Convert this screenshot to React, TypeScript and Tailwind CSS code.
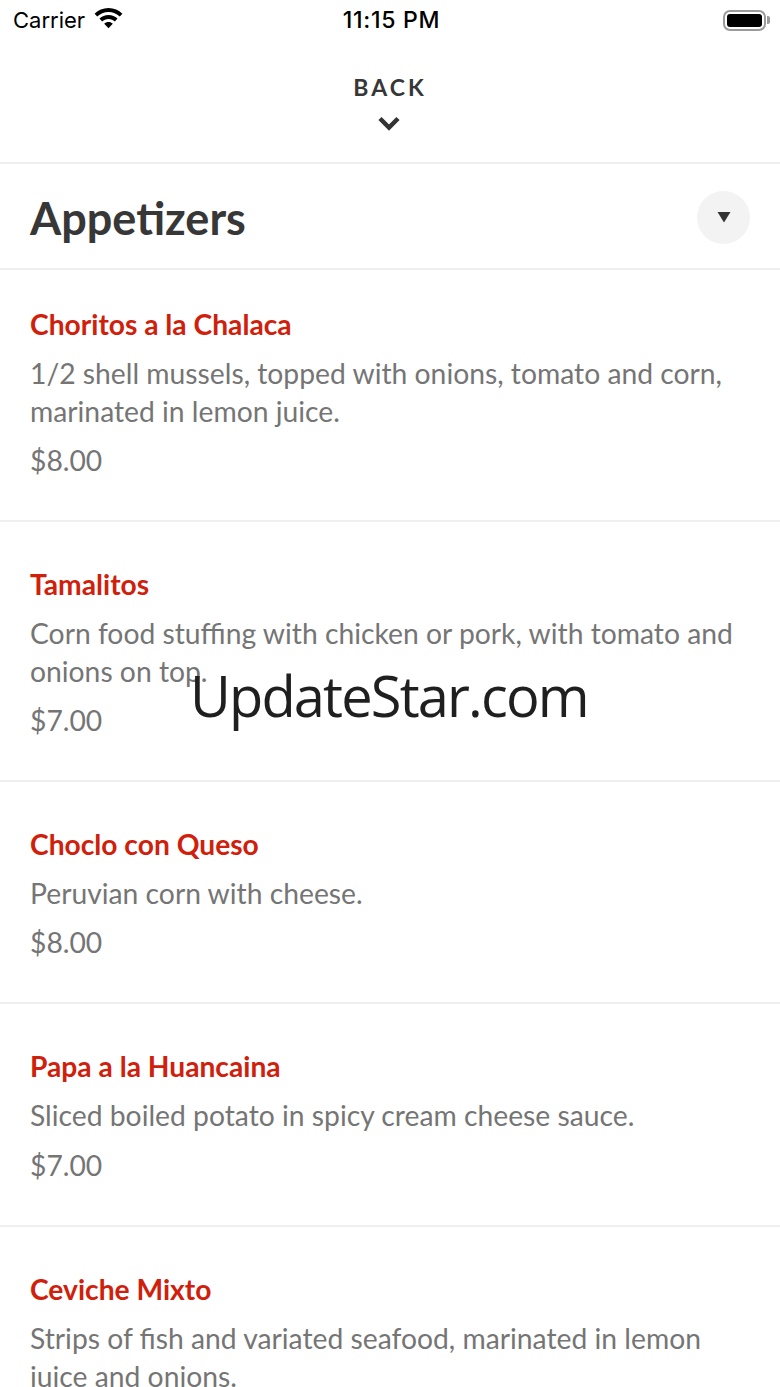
const items = [
  {
    name: "Choritos a la Chalaca",
    desc: ["1/2 shell mussels, topped with onions, tomato and corn,", "marinated in lemon juice."],
    price: "$8.00",
  },
  {
    name: "Tamalitos",
    desc: ["Corn food stuffing with chicken or pork, with tomato and", "onions on top."],
    price: "$7.00",
  },
  { name: "Choclo con Queso", desc: ["Peruvian corn with cheese."], price: "$8.00" },
  { name: "Papa a la Huancaina", desc: ["Sliced boiled potato in spicy cream cheese sauce."], price: "$7.00" },
  {
    name: "Ceviche Mixto",
    desc: ["Strips of fish and variated seafood, marinated in lemon", "juice and onions."],
    price: "",
  },
];

function StatusBar() {
  return (
    <div className="flex h-[40px] items-center justify-between pl-[13px] pr-[10px] text-black">
      <div className="flex w-[200px] items-center gap-[9px]">
        <span className="font-['Inter',sans-serif] text-[22px] leading-none">Carrier</span>
        <svg width="29" height="21" viewBox="0 0 29 21" className="mt-[-4px]">
          <path d="M14.5 0C9 0 4.2 2.2 0.6 5.7l2.6 2.8C6.1 5.6 10.1 3.9 14.5 3.9s8.4 1.7 11.3 4.6l2.6-2.8C24.8 2.2 20 0 14.5 0z" fill="#000" />
          <path d="M14.5 7c-3.5 0-6.6 1.4-9 3.6l2.6 2.8c1.7-1.6 3.9-2.5 6.4-2.5s4.7 1 6.4 2.5l2.6-2.8c-2.4-2.2-5.5-3.6-9-3.6z" fill="#000" />
          <path d="M14.5 14c-1.7 0-3.2 0.7-4.3 1.7l4.3 4.6 4.3-4.6c-1.1-1-2.6-1.7-4.3-1.7z" fill="#000" />
        </svg>
      </div>
      <span className="font-['Inter',sans-serif] text-[23px] font-medium leading-none tracking-[0.7px]">11:15 PM</span>
      <div className="flex w-[200px] items-center justify-end">
        <div className="flex h-[21px] w-[43px] items-center rounded-[7px] border-2 border-[#9b9b9b] p-[2px]">
          <div className="h-full w-full rounded-[3px] bg-black" />
        </div>
        <div className="ml-[1px] h-[8px] w-[3px] rounded-r-[2px] bg-[#9b9b9b]" />
      </div>
    </div>
  );
}

export default function App() {
  return (
    <div className="relative h-[1387px] w-[780px] overflow-hidden bg-white font-['Lato',sans-serif]">
      <StatusBar />

      <div className="flex h-[124px] flex-col items-center border-b-2 border-[#efefef] pt-[32px]">
        <span className="text-[23px] font-bold leading-[30px] tracking-[3px] text-[#373737]">BACK</span>
        <svg width="24" height="16" viewBox="0 0 24 16" className="mr-[2px] mt-[14px]">
          <path d="M3 2.5l9 9 9-9" fill="none" stroke="#333" strokeWidth="4.5" />
        </svg>
      </div>

      <div className="flex h-[106px] items-center justify-between border-b-2 border-[#efefef] pl-[30px] pr-[30px]">
        <h1 className="pt-[4px] text-[45px] font-bold leading-none text-[#373737]">Appetizers</h1>
        <div className="mt-[2px] flex h-[53px] w-[53px] items-center justify-center rounded-full bg-[#f3f3f3]">
          <svg width="14" height="12" viewBox="0 0 14 12">
            <path d="M0.5 1h13L7 11.5z" fill="#333" />
          </svg>
        </div>
      </div>

      {items.map((item, i) => (
        <div
          key={item.name}
          className={
            i === 0
              ? "border-b-2 border-[#efefef] px-[30px] pb-[41px] pt-[34px]"
              : "border-b-2 border-[#efefef] px-[30px] pb-[41px] pt-[42px] last:border-b-0"
          }
        >
          <div className="text-[28.2px] font-bold leading-[40px] text-[#d0200b]">{item.name}</div>
          <div className="mt-[10px] text-[28.27px] leading-[38px] text-[#757575]">
            {item.desc.map((line) => (
              <div key={line}>{line}</div>
            ))}
          </div>
          {item.price && (
            <div className={i === 3 ? "mt-[12px] text-[28.27px] leading-[38px] text-[#757575]" : "mt-[11px] text-[28.27px] leading-[38px] text-[#757575]"}>
              {item.price}
            </div>
          )}
        </div>
      ))}

      <div className="absolute left-[190px] top-[657px] font-['Open_Sans',sans-serif] text-[56px] leading-[76px] tracking-[-1.85px] text-[#1f1f1f]">
        UpdateStar.com
      </div>
    </div>
  );
}
